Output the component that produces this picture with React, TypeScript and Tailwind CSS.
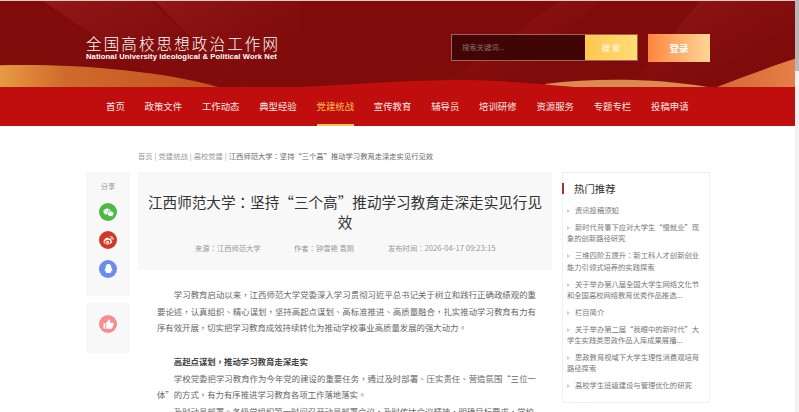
import { RiQqFill, RiThumbUpFill, RiWechatFill, RiWeiboFill } from 'react-icons/ri';

const navItems = ['首页', '政策文件', '工作动态', '典型经验', '党建统战', '宣传教育', '辅导员', '培训研修', '资源服务', '专题专栏', '投稿申请'];

const hotList = [
  '资讯投稿须知',
  '新时代背景下应对大学生“慢就业”现象的创新路径研究',
  '三维四阶五提升：新工科人才创新创业能力引领式培养的实践探索',
  '关于举办第八届全国大学生网络文化节和全国高校网络教育优秀作品推选...',
  '栏目简介',
  '关于举办第二届“我眼中的新时代”大学生实践类思政作品入库成果展播...',
  '思政教育视域下大学生理性消费观培育路径探索',
  '高校学生班级建设与管理优化的研究',
];

const HeaderArt = () => (
  <svg className="absolute inset-0 h-full w-full" viewBox="0 0 799 87" preserveAspectRatio="none">
    <defs>
      <linearGradient id="glow" x1="0" x2="1">
        <stop offset="0" stopColor="#e79a42" />
        <stop offset="0.3" stopColor="#cf6a2c" />
        <stop offset="1" stopColor="#c5521f" />
      </linearGradient>
      <linearGradient id="glowRight" x1="0" x2="1">
        <stop offset="0" stopColor="#d46a35" />
        <stop offset="1" stopColor="#e67f48" />
      </linearGradient>
      <linearGradient id="band" x1="0" x2="1" y1="0" y2="1">
        <stop offset="0" stopColor="#a02020" stopOpacity="0.6" />
        <stop offset="1" stopColor="#7f0b0b" stopOpacity="0" />
      </linearGradient>
    </defs>
    <path d="M43 0 L150 0 L240 87 L170 87 Z" fill="url(#band)" />
    <path d="M155 0 L300 0 L300 87 L240 87 Z" fill="url(#band)" />
    <path d="M560 0 L600 0 L500 87 L440 87 Z" fill="url(#band)" />
    <path d="M700 0 L799 0 L799 18 L690 87 L630 87 Z" fill="url(#band)" />
    <path d="M0 65 C 70 63, 160 70, 218 87 L0 87 Z" fill="url(#glow)" />
    <path d="M545 84 C 600 77, 660 79, 708 87 L545 87 Z" fill="#dc8a50" />
    <path d="M717 87 C 745 76, 775 65, 799 57 L799 87 Z" fill="url(#glowRight)" />
    <path d="M300 87 C 360 84, 420 79, 470 80 C 510 81, 545 84, 574 87 Z" fill="#c00d0d" />
  </svg>
);

const Share = ({ className, children }: { className: string; children: React.ReactNode }) => (
  <div className={`flex h-[18px] w-[18px] items-center justify-center rounded-full text-[11px] text-white ${className}`}>{children}</div>
);

export default function App() {
  return (
    <div className="relative h-[412px] w-[799px] overflow-hidden bg-white font-['Noto_Sans_CJK_SC','Liberation_Sans',sans-serif]">
      <header className="relative h-[87px] border-t border-[#e8c9c9] bg-[#7f0b0b]">
        <HeaderArt />
        <div className="relative flex h-full items-start pl-[86px]">
          <div className="mt-[33px] w-[192px] text-white">
            <div className="flex justify-between text-[15.5px] leading-[18px] font-light">
              {'全国高校思想政治工作网'.split('').map((c, i) => (
                <span key={i}>{c}</span>
              ))}
            </div>
            <div className="mt-[0px] whitespace-nowrap font-['Liberation_Sans',sans-serif] text-[7.6px] font-bold leading-[10px] tracking-[0.12px]">
              National University Ideological &amp; Political Work Net
            </div>
          </div>
          <div className="ml-[173px] mt-[33px] flex h-[27px] w-[187px] border border-[#a5605c]">
            <div className="flex flex-1 items-center bg-[#410505] pl-[10px] text-[7.3px] text-[#8c6a68]">搜索关键词...</div>
            <div className="flex w-[52px] items-center justify-center bg-gradient-to-r from-[#fdc74f] to-[#fedc75] text-[8.4px] text-white">搜 索</div>
          </div>
          <div className="ml-[10px] mt-[33px] flex h-[28px] w-[62px] items-center justify-center bg-gradient-to-r from-[#fd853a] to-[#fed596] text-[9.6px] font-bold text-white">
            登录
          </div>
        </div>
      </header>
      <nav className="flex h-[39px] items-stretch gap-[19.8px] bg-[#c00d0d] pl-[106px] text-[9.4px] text-[#fbe9e4]">
        {navItems.map((item, i) => (
          <a
            key={item}
            className={`flex items-center whitespace-nowrap border-b-2 pt-[2px] ${i === 4 ? 'border-[#ffc24d] text-[#ffc24d]' : 'border-transparent'}`}
          >
            {item}
          </a>
        ))}
      </nav>

      <div className="pl-[138px] pt-[25px] font-['Noto_Sans_CJK_TC',sans-serif] text-[7.3px] leading-[10px] text-[#999] [word-spacing:0.35px]">
        首页 | 党建统战 | 高校党建 | <span className="text-[#666]">江西师范大学：坚持“三个高”推动学习教育走深走实见行见效</span>
      </div>

      <main className="mt-[11px] flex pl-[86px] font-['Noto_Sans_CJK_TC',sans-serif]">
        <aside className="w-[44px]">
          <div className="flex h-[124px] flex-col items-center bg-[#f8f8f8] pt-[9px]">
            <span className="text-[7.3px] leading-[10px] text-[#999]">分享</span>
            <Share className="mt-[12px] bg-[#4cb944]">
              <RiWechatFill />
            </Share>
            <Share className="mt-[10px] bg-[#cf3a26]">
              <RiWeiboFill />
            </Share>
            <Share className="mt-[10.500px] bg-[#6a8cf0]">
              <RiQqFill />
            </Share>
          </div>
          <div className="mt-[7px] flex h-[50px] justify-center bg-[#f8f8f8] pt-[12px]">
            <Share className="bg-[#f88d90]">
              <RiThumbUpFill />
            </Share>
          </div>
        </aside>

        <article className="ml-[8px] w-[414px]">
          <div className="h-[98px] bg-[#f8f8f8] pt-[20px]">
            <h1 className="px-[8px] text-center text-[14.6px] font-normal leading-[19.5px] text-[#333]">
              江西师范大学：坚持“三个高”推动学习教育走深走实见行见效
            </h1>
            <div className="mt-[12px] flex pl-[57px] text-[7.3px] leading-[10px] text-[#999]">
              <span className="w-[99px]">来源：江西师范大学</span>
              <span className="w-[94px]">作者：钟雪艳 袁刚</span>
              <span>
                发布时间：<span className="text-[7.7px]">2026-04-17 09:23:15</span>
              </span>
            </div>
          </div>
          <div className="pl-[19px] pr-[16px] pt-[16px] text-justify text-[8.4px] leading-[16.7px] text-[#666]">
            <p className="indent-[16.8px]">
              学习教育启动以来，江西师范大学党委深入学习贯彻习近平总书记关于树立和践行正确政绩观的重要论述，认真组织、精心谋划，坚持高起点谋划、高标准推进、高质量融合，扎实推动学习教育有力有序有效开展，切实把学习教育成效持续转化为推动学校事业高质量发展的强大动力。
            </p>
            <p className="mt-[16.7px] indent-[16.8px] font-bold text-[#444]">高起点谋划，推动学习教育走深走实</p>
            <p className="indent-[16.8px]">
              学校党委把学习教育作为今年党的建设的重要任务，通过及时部署、压实责任、营造氛围“三位一体”的方式，有力有序推进学习教育各项工作落地落实。
            </p>
            <p className="indent-[16.8px]">
              及时动员部署。各级党组织第一时间召开动员部署会议，及时传达会议精神，明确目标要求，学校
            </p>
          </div>
        </article>

        <aside className="ml-[10px] h-[231px] w-[148px] border border-[#f0f0f0] pl-[4px] pr-[9px]">
          <h2 className="relative -ml-[5px] mt-[9px] pl-[12px] text-[10.4px] font-normal leading-[14px] text-[#333]">
            <span className="absolute left-0 top-[1px] h-[11px] w-[2px] bg-[#b8282d]" />
            热门推荐
          </h2>
          <ul className="mt-[9px] text-[7.3px] leading-[11.3px] text-[#777]">
            {hotList.map((h) => (
              <li key={h} className="mb-[5.7px]">
                <span className="inline-block w-[8px] align-middle">
                  <span className="block h-0 w-0 border-y-[2px] border-l-[3px] border-y-transparent border-l-[#ccc]" />
                </span>
                {h}
              </li>
            ))}
          </ul>
        </aside>
      </main>

      {/* scrollbar strip on the right edge */}
      <div className="absolute right-0 top-0 h-full w-[4px] bg-[#f1f1f1]">
        <div className="h-[71px] bg-[#b8b8b8]" />
      </div>
    </div>
  );
}
